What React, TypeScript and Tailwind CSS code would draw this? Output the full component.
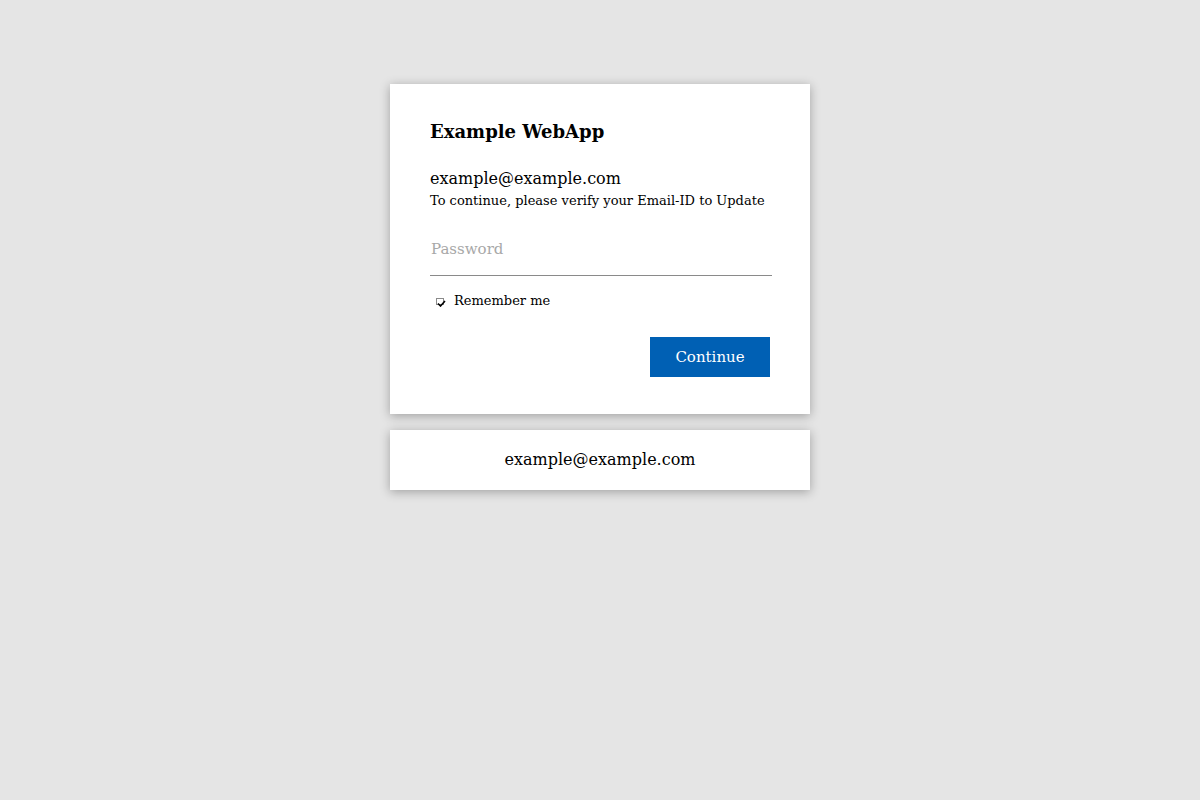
import React from "react";

export default function App() {
  return (
    <div className="min-h-[800px] w-full bg-[#e5e5e5] flex flex-col items-center pt-[84px] gap-4" style={{ fontFamily: '"DejaVu Serif", serif' }}>
      <div className="w-[420px] h-[330px] bg-white shadow-[0_2px_10px_rgba(0,0,0,0.3)] px-10 pt-[36px]">
        <div className="text-[18px] font-bold leading-[24px] text-black">Example WebApp</div>
        <div className="mt-[25px] text-[16px] leading-[20px] text-black">example@example.com</div>
        <div className="mt-[4px] text-[13px] leading-[16px] text-black">To continue, please verify your Email-ID to Update</div>
        <div className="mt-[20px] w-[342px] h-[47px] border-b border-[#8a8a8a] flex items-center">
          <input
            type="password"
            placeholder="Password"
            className="w-full bg-transparent outline-none text-[15px] pl-[1px] pb-[6px] placeholder:text-[#a8a8a8]"
            style={{ fontFamily: '"DejaVu Serif", serif' }}
          />
        </div>
        <div className="mt-[16px] flex items-center h-[18px]">
          <div className="relative ml-[6px] w-[9px] h-[9px] mt-[2px]">
            <div className="absolute left-0 top-0 w-[8px] h-[7px] border border-[#8a8a8a] bg-white"></div>
            <svg className="absolute left-[1px] top-[2px]" width="9" height="7" viewBox="0 0 9 7">
              <path d="M1 3.5 L3.5 6 L8 1" stroke="#000" strokeWidth="1.6" fill="none" />
            </svg>
          </div>
          <span className="ml-[9px] text-[13px] text-black">Remember me</span>
        </div>
        <div className="mt-[27px] flex justify-end w-[340px]">
          <button className="w-[120px] h-[40px] bg-[#0060b4] text-white text-[15px]" style={{ fontFamily: '"DejaVu Serif", serif' }}>Continue</button>
        </div>
      </div>
      <div className="w-[420px] h-[60px] bg-white shadow-[0_2px_10px_rgba(0,0,0,0.3)] flex items-center justify-center text-[16px] text-black">
        example@example.com
      </div>
    </div>
  );
}
